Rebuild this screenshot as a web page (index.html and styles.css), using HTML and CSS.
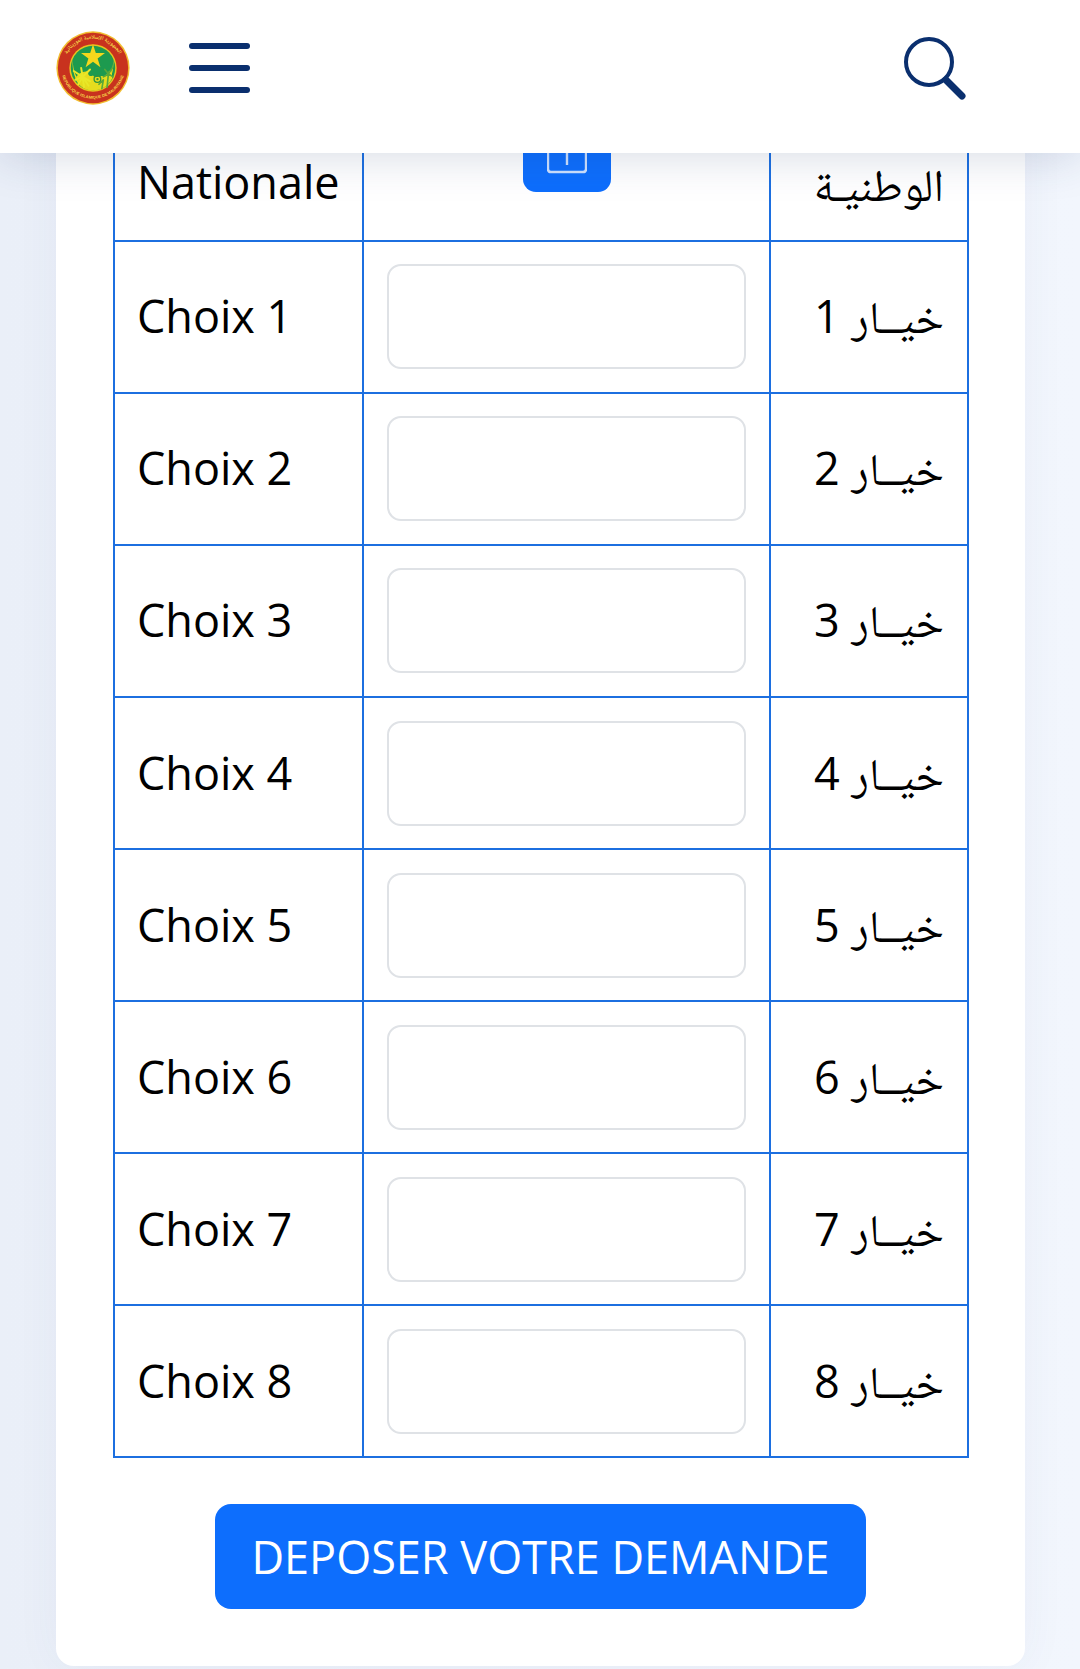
FILE: index.html
```html
<!DOCTYPE html>
<html lang="fr">
<head>
<meta charset="utf-8">
<title>Dépôt de demande</title>
<link rel="stylesheet" href="styles.css">
</head>
<body>
<header class="topbar">
  <svg class="emblem" viewBox="0 0 100 100" aria-label="Emblème">
    <defs>
      <path id="arcTop" d="M11 58 A39.8 39.8 0 1 1 89 58"/>
      <path id="arcBottom" d="M6.5 48 A43.5 43.5 0 0 0 93.5 48"/>
    </defs>
    <circle cx="50" cy="50" r="49.5" fill="#f2bd30"/>
    <circle cx="50" cy="50" r="47.5" fill="#c8321e"/>
    <text class="ring-ar" direction="rtl"><textPath href="#arcTop" startOffset="50%" text-anchor="middle">الجمهورية الإسلامية الموريتانية</textPath></text>
    <text class="ring-fr"><textPath href="#arcBottom" startOffset="50%" text-anchor="middle">REPUBLIQUE ISLAMIQUE DE MAURITANIE</textPath></text>
    <circle cx="50" cy="50" r="32" fill="#e9c21e"/>
    <circle cx="50" cy="50" r="30" fill="#1d9a4f"/>
    <path d="M23 36 C21 62 36 76 50 76 C64 76 79 62 77 36 C80 58 70 80 50 80 C30 80 20 58 23 36 Z" fill="#f0dc1e"/>
    <path d="M50 18 L53.8 29.7 L66.2 29.7 L56.2 37 L60 49 L50 41.5 L40 49 L43.8 37 L33.8 29.7 L46.2 29.7 Z" fill="#f4d81c"/>
    <path d="M26 64 C34 52 40 56 44 54 C42 60 46 62 50 60 C54 66 60 58 66 62 C70 56 72 54 75 52 L76 64 C70 76 60 80 50 80 C38 80 30 74 26 64 Z" fill="#e6dc1e"/>
    <path class="frond-light" d="M38 76 L36 62 M36 62 L24 54 M36 62 L26 66 M36 62 L30 72 M36 62 L34 50 M36 62 L46 52 M36 62 L46 68 M36 62 L44 74"/>
    <path class="frond-green" d="M69 76 L71 56 M71 58 L64 62 M71 58 L77 62 M71 58 L66 52 M71 58 L76 50 M62 78 L64 66 M64 66 L58 72"/>
    <circle cx="56" cy="65" r="4.5" fill="none" stroke="#2e9440" stroke-width="1.8"/>
    <circle cx="56" cy="65" r="1.6" fill="#2e9440"/>
  </svg>
  <div class="burger" aria-label="Menu"><span></span><span></span><span></span></div>
  <svg class="search" viewBox="0 0 64 64" aria-label="Rechercher">
    <circle cx="27" cy="26" r="23" fill="none" stroke="#0a2f6e" stroke-width="4"/>
    <line x1="44" y1="44" x2="60" y2="60" stroke="#0a2f6e" stroke-width="7" stroke-linecap="round"/>
  </svg>
</header>
<main class="viewport">
  <section class="card">
    <table class="choices">
      <tbody>
        <tr class="head">
          <td class="label">Nationale</td>
          <td class="field"><button class="upload" type="button" aria-label="Téléverser"><svg viewBox="0 0 40 40"><path d="M1 0 V25 Q1 28 4 28 H36 Q39 28 39 25 V0" fill="none" stroke="#cfe2ff" stroke-width="2.4"/><path d="M20 4 V21" stroke="#cfe2ff" stroke-width="2.4"/></svg></button></td>
          <td class="ar" dir="rtl"><span class="ar-word">الوطنيـة</span></td>
        </tr>
        <tr><td class="label">Choix 1</td><td class="field"><input class="box" type="text"></td><td class="ar" dir="rtl"><span class="ar-word">خيــار</span> 1</td></tr>
        <tr><td class="label">Choix 2</td><td class="field"><input class="box" type="text"></td><td class="ar" dir="rtl"><span class="ar-word">خيــار</span> 2</td></tr>
        <tr><td class="label">Choix 3</td><td class="field"><input class="box" type="text"></td><td class="ar" dir="rtl"><span class="ar-word">خيــار</span> 3</td></tr>
        <tr><td class="label">Choix 4</td><td class="field"><input class="box" type="text"></td><td class="ar" dir="rtl"><span class="ar-word">خيــار</span> 4</td></tr>
        <tr><td class="label">Choix 5</td><td class="field"><input class="box" type="text"></td><td class="ar" dir="rtl"><span class="ar-word">خيــار</span> 5</td></tr>
        <tr><td class="label">Choix 6</td><td class="field"><input class="box" type="text"></td><td class="ar" dir="rtl"><span class="ar-word">خيــار</span> 6</td></tr>
        <tr><td class="label">Choix 7</td><td class="field"><input class="box" type="text"></td><td class="ar" dir="rtl"><span class="ar-word">خيــار</span> 7</td></tr>
        <tr><td class="label">Choix 8</td><td class="field"><input class="box" type="text"></td><td class="ar" dir="rtl"><span class="ar-word">خيــار</span> 8</td></tr>
      </tbody>
    </table>
    <div class="actions"><button class="submit" type="button">DEPOSER VOTRE DEMANDE</button></div>
  </section>
</main>
</body>
</html>
```
FILE: styles.css
```css
* { box-sizing: border-box; }
html, body { margin: 0; height: 100%; }
body {
  width: 1080px;
  height: 1669px;
  display: flex;
  flex-direction: column;
  overflow: hidden;
  font-family: "Open Sans", "Noto Sans", "DejaVu Sans", sans-serif;
  color: #000;
  background: linear-gradient(90deg, #eaeff8 0, #f2f6fd 100%);
}
.topbar {
  position: relative;
  z-index: 2;
  flex: 0 0 153px;
  height: 153px;
  background: #fff;
  display: flex;
  align-items: flex-start;
  padding: 31px 114px 0 56px;
  box-shadow: 0 4px 42px rgba(40, 60, 110, .18);
}
.emblem { width: 74px; height: 74px; flex: none; }
.ring-fr { font: 700 5.4px "Liberation Sans", "DejaVu Sans", sans-serif; fill: #f6d84a; }
.ring-ar { font: 700 7.5px "Noto Naskh Arabic", "Noto Sans Arabic", "DejaVu Sans", sans-serif; fill: #f6d84a; }
.frond-light { fill: none; stroke: #e8e828; stroke-width: 2.6; stroke-linecap: round; }
.frond-green { fill: none; stroke: #5aa838; stroke-width: 2.2; stroke-linecap: round; }
.burger {
  margin: 12px 0 0 59px;
  width: 61px;
  height: 50px;
  display: flex;
  flex-direction: column;
  justify-content: space-between;
}
.burger span { display: block; height: 6px; border-radius: 3px; background: #0a2f6e; }
.search { width: 64px; height: 64px; margin: 5px 0 0 auto; flex: none; }
.viewport { flex: 1; overflow: hidden; padding: 0 55px 0 56px; }
.card {
  margin-top: -65.4px;
  height: 1578.4px;
  padding: 0 57px;
  background: #fff;
  border-radius: 0 0 18px 18px;
  box-shadow: 0 0 46px rgba(50, 80, 140, .05);
}
.choices {
  width: 856px;
  table-layout: fixed;
  border-collapse: collapse;
  font-size: 45px;
}
.choices td { border: 2px solid #1c6fe0; height: 152.1px; padding: 0 23px 2px; }
.choices td.label { width: 249px; padding-left: 22px; }
.choices td.field { width: 406px; padding: 0 23px; }
.choices td.ar { width: 198px; text-align: right; }
.ar-word {
  font-family: "Noto Naskh Arabic", "Noto Sans Arabic", "Droid Sans Arabic", "Droid Arabic Naskh", serif;
  font-size: 45px;
  line-height: 0;
}
.choices .head td { vertical-align: bottom; padding-bottom: 28px; }
.choices .head td.ar { padding-bottom: 26px; }
.choices .head td.field { padding-bottom: 0; }
.box {
  display: block;
  width: 100%;
  height: 105px;
  background: #fff;
  border: 2px solid #dfe2e6;
  border-radius: 14px;
}
.upload {
  display: block;
  width: 88px;
  height: 88px;
  margin: 0 auto 48px;
  padding: 0;
  border: 0;
  border-radius: 13px;
  background: #0d6efd;
}
.upload svg { display: block; width: 40px; height: 40px; margin: 33px auto 0; }
.actions { display: flex; justify-content: center; padding-top: 45.4px; }
.submit {
  width: 651px;
  height: 105px;
  border: 0;
  border-radius: 16px;
  background: #0d6efd;
  color: #fff;
  font: 45px "Open Sans", sans-serif;
}
```
